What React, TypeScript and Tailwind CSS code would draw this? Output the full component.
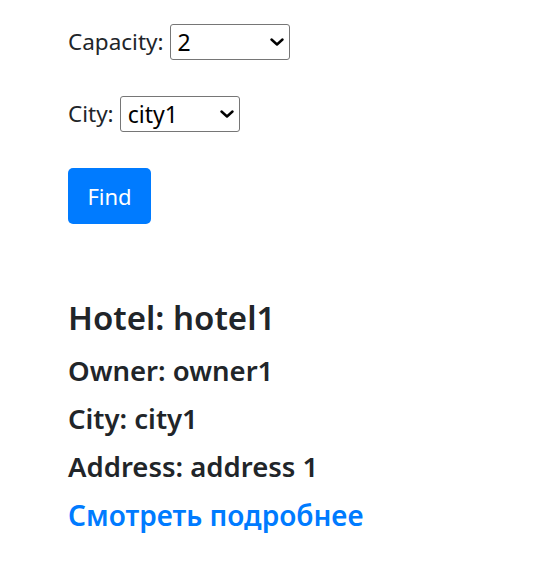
const font = { fontFamily: '"Noto Sans", "Open Sans", sans-serif' };

function Select({ value, options, width }: { value: string; options: string[]; width: string }) {
  return (
    <div className={`relative ${width}`}>
      <select
        defaultValue={value}
        className="h-[36px] w-full appearance-none rounded-[3px] border border-[#767676] bg-white py-0 pl-[7px] pr-8 text-[23px] text-black outline-none"
        style={font}
      >
        {options.map((o) => (
          <option key={o}>{o}</option>
        ))}
      </select>
      {/* dropdown chevron */}
      <svg
        aria-hidden="true"
        viewBox="0 0 14 8"
        className="pointer-events-none absolute right-[6px] top-1/2 h-[8px] w-[14px] -translate-y-1/2"
        fill="none"
        stroke="black"
        strokeWidth={2.4}
        strokeLinecap="round"
        strokeLinejoin="round"
      >
        <path d="M1.5 1.5 7 6.5l5.5-5" />
      </svg>
    </div>
  );
}

export default function App() {
  return (
    <div className="min-h-screen bg-white pl-[68px] pt-[24px] text-[#212529]" style={font}>
      <form className="flex flex-col items-start gap-[36px]">
        <div className="flex items-center gap-[6px] text-[22.5px]">
          <label>Capacity:</label>
          <Select value="2" options={["1", "2", "3", "4"]} width="w-[120px]" />
        </div>
        <div className="flex items-center gap-[6px] text-[22.5px]">
          <label>City:</label>
          <Select value="city1" options={["city1", "city2"]} width="w-[120px]" />
        </div>
        <button
          type="button"
          className="h-[56px] w-[83px] rounded-[5px] bg-[#007bff] text-[22px] text-white"
        >
          Find
        </button>
      </form>

      <div className="mt-[74px] flex flex-col gap-[10px]">
        <h2 className="mb-[4px] text-[33px] font-semibold leading-[1.2]">Hotel: hotel1</h2>
        <h4 className="text-[27.5px] font-semibold leading-[38px]">Owner: owner1</h4>
        <h4 className="text-[27.5px] font-semibold leading-[38px]">City: city1</h4>
        <h4 className="text-[27.5px] font-semibold leading-[38px]">Address: address 1</h4>
        <a href="#" className="text-[28px] font-semibold leading-[38px] text-[#007bff]">
          Смотреть подробнее
        </a>
      </div>
    </div>
  );
}
